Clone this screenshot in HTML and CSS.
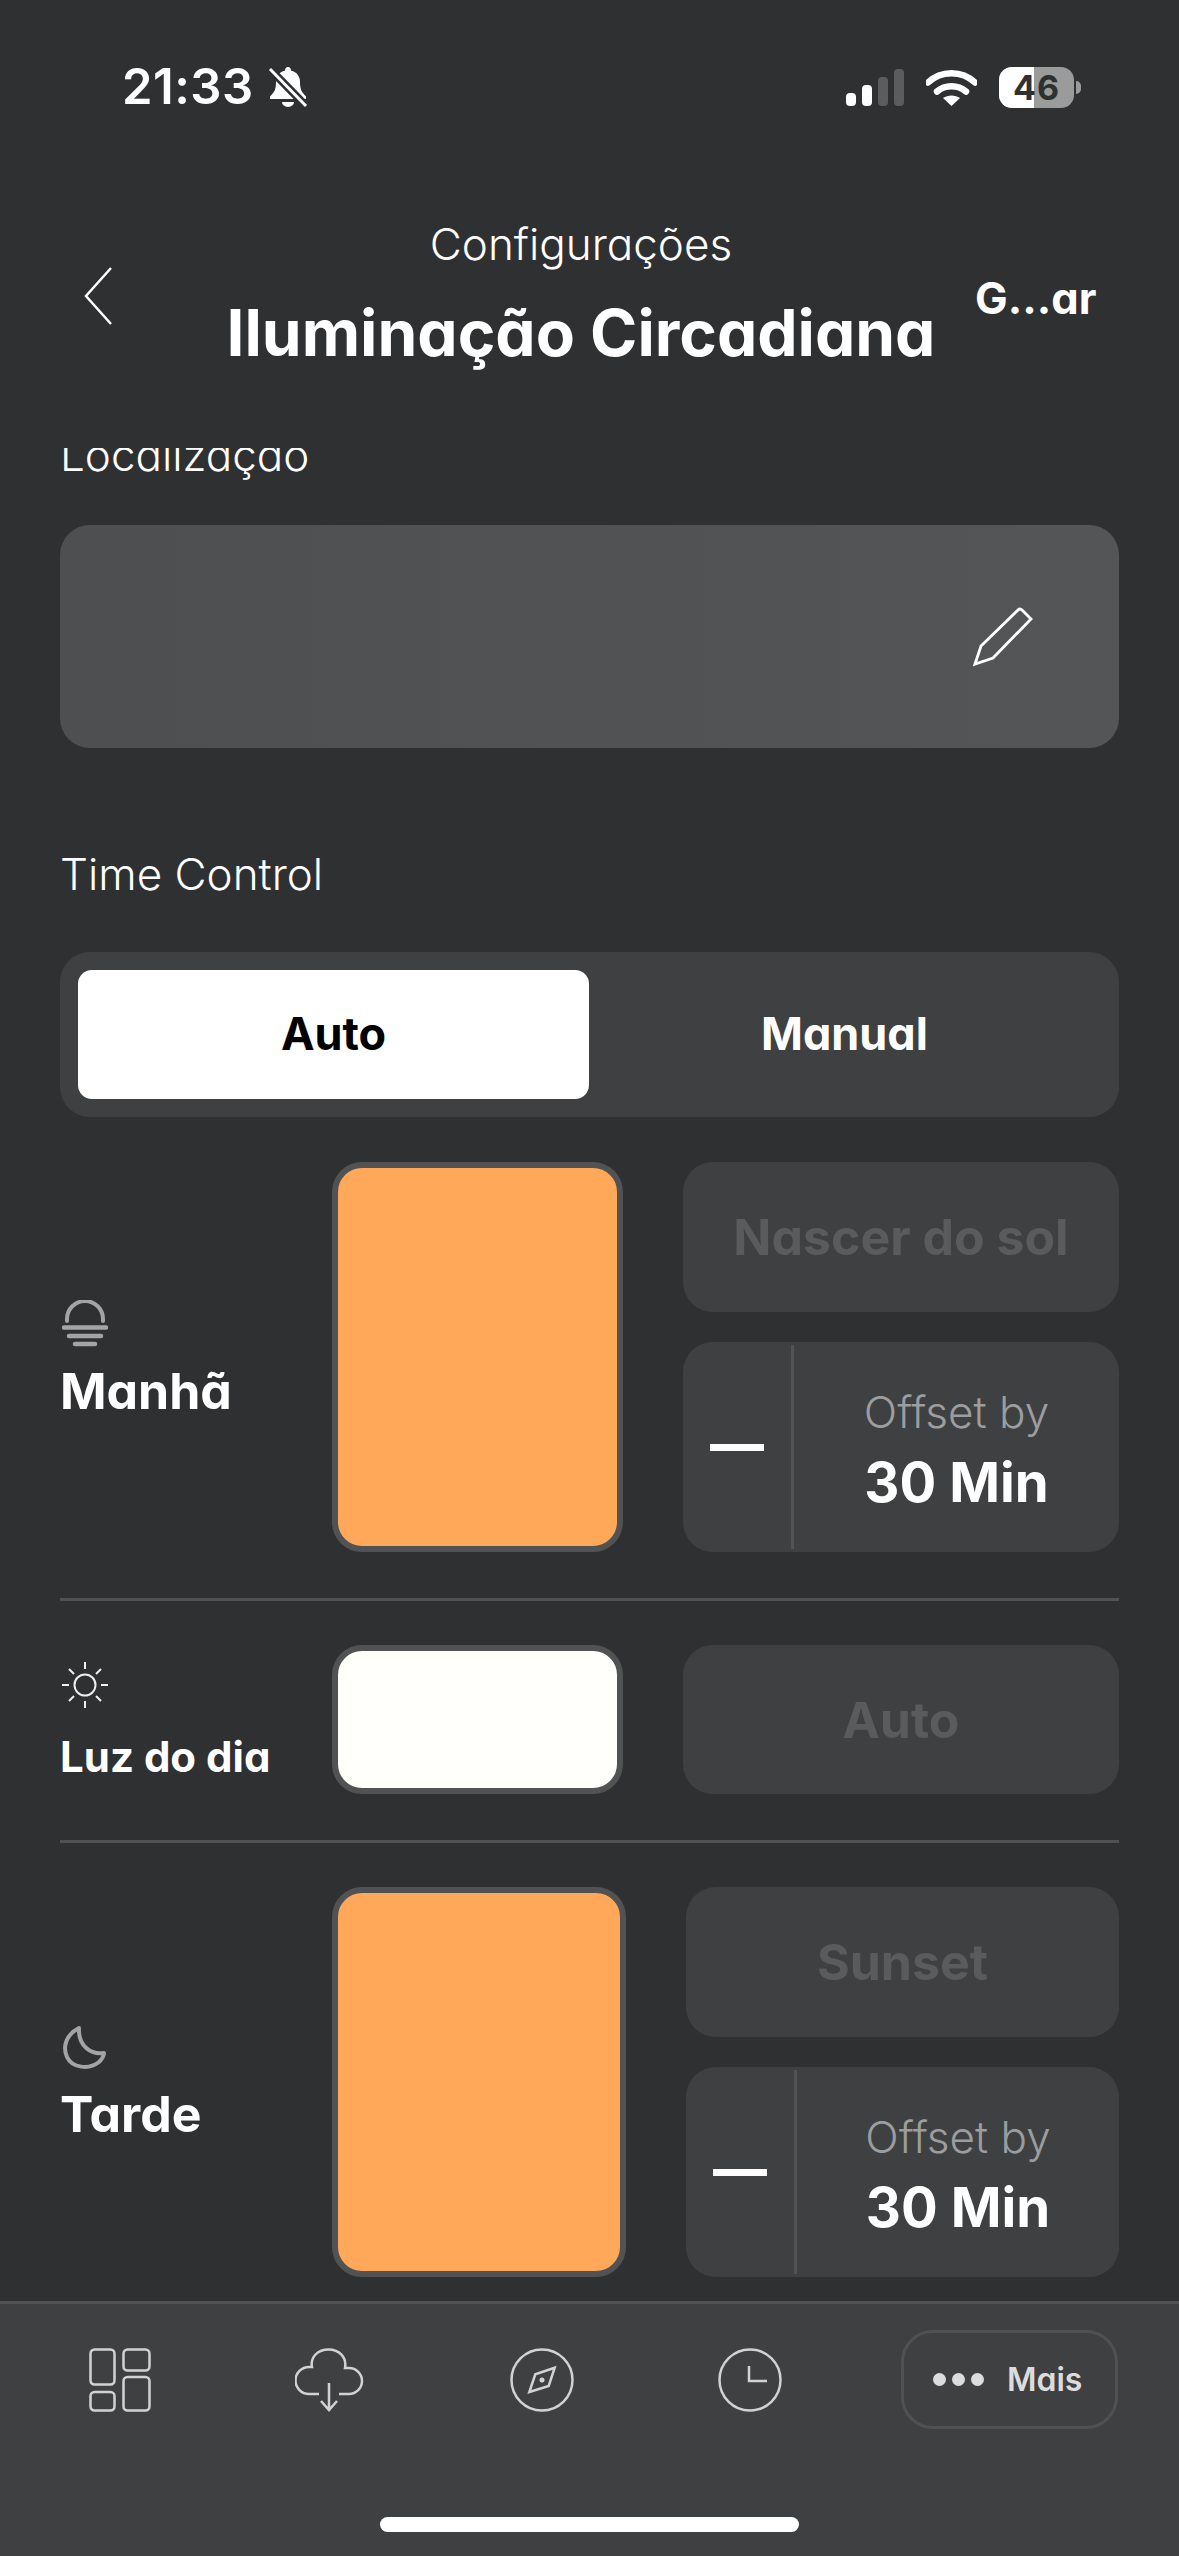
FILE: index.html
```html
<!DOCTYPE html>
<html lang="pt">
<head>
<meta charset="utf-8">
<title>Iluminação Circadiana</title>
<link rel="stylesheet" href="styles.css">
</head>
<body>
<div class="app">
  <div class="status">
    <div class="status-left">
      <span class="time">21:33</span>
      <svg class="bell" width="40" height="42" viewBox="0 0 40 42"><path d="M20 1c2 0 3 1.500 3 3.500 6 1.500 9 6 9 12 0 7 2 10 6 14v2.500H2V30.500c4-4 6-7 6-14 0-6 3-10.500 9-12C17 2.500 18 1 20 1z" fill="#fff"/><path d="M14 36h12a6 5 0 0 1-12 0z" fill="#fff"/><path d="M2 3l36 37" stroke="#2f3032" stroke-width="8"/><path d="M2 3l36 37" stroke="#fff" stroke-width="3"/></svg>
    </div>
    <div class="status-right">
      <svg width="58" height="37" viewBox="0 0 58 37"><rect x="0" y="24" width="10" height="13" rx="4" fill="#fff"/><rect x="16" y="16" width="10" height="21" rx="4" fill="#fff"/><rect x="32" y="8" width="10" height="29" rx="4" fill="#5b5c5e"/><rect x="48" y="0" width="10" height="37" rx="4" fill="#5b5c5e"/></svg>
      <svg width="51" height="37" viewBox="0 0 51 37"><path d="M2 13.500C15 1 36 1 49 13.500" fill="none" stroke="#fff" stroke-width="6.500" stroke-linecap="round"/><path d="M11 22.500c8-7 21-7 29 0" fill="none" stroke="#fff" stroke-width="6.500" stroke-linecap="round"/><path d="M17 29c5-3.500 12-3.500 17 0l-8.500 8z" fill="#fff"/></svg>
      <div class="battery"><div class="battery-body"><span class="battery-fill"></span><span class="battery-num">46</span></div><span class="battery-cap"></span></div>
    </div>
  </div>

  <header class="header">
    <svg class="back" width="28" height="58" viewBox="0 0 28 58"><path d="M27 1L2 29l25 28" fill="none" stroke="#fff" stroke-width="2.500"/></svg>
    <div class="titles">
      <div class="crumb">Configurações</div>
      <h1 class="title">Iluminação Circadiana</h1>
    </div>
    <div class="save">G...ar</div>
  </header>

  <main class="scroll">
    <div class="label clipped">Localização</div>
    <div class="location">
      <svg width="60" height="60" viewBox="0 0 60 60"><path d="M2 57L8 39 45 3Q47 1 49 3L58 12 20 51z" fill="none" stroke="#fff" stroke-width="2.800" stroke-linejoin="miter"/></svg>
    </div>

    <div class="label time-label">Time Control</div>
    <div class="segment">
      <div class="seg seg-on">Auto</div>
      <div class="seg">Manual</div>
    </div>

    <section class="row row-first">
      <div class="row-label">
        <svg class="icon" width="46" height="47" viewBox="0 0 46 47"><path d="M5 21v-2a18 18 0 0 1 36 0v2" fill="none" stroke="#a3a4a5" stroke-width="4" stroke-linecap="round"/><path d="M2 27.500h42M7 36h32M13 44h20" fill="none" stroke="#a3a4a5" stroke-width="4.500" stroke-linecap="round"/></svg>
        <div class="name">Manhã</div>
      </div>
      <div class="swatch swatch-orange"></div>
      <div class="cards">
        <div class="card card-muted">Nascer do sol</div>
        <div class="card offset">
          <div class="minus"><span class="minus-bar"></span></div>
          <div class="offset-text"><span class="offset-by">Offset by</span><span class="offset-val">30 Min</span></div>
        </div>
      </div>
    </section>
    <div class="divider"></div>

    <section class="row row-short">
      <div class="row-label">
        <svg class="icon" width="46" height="46" viewBox="0 0 46 46"><circle cx="23" cy="23" r="10.500" fill="none" stroke="#eee" stroke-width="2"/><path d="M23 0v7M23 39v7M0 23h7M39 23h7M7 7l5 5M34 34l5 5M39 7l-5 5M12 34l-5 5" stroke="#eee" stroke-width="2"/></svg>
        <div class="name name-small">Luz do dia</div>
      </div>
      <div class="swatch swatch-white"></div>
      <div class="cards">
        <div class="card card-muted card-fill">Auto</div>
      </div>
    </section>
    <div class="divider"></div>

    <section class="row">
      <div class="row-label">
        <svg class="icon" width="44" height="44" viewBox="0 0 44 44"><path d="M17 2C5 8 0 20 5 31c5 11 22 13 32 5 3-3 5-6 5-9-13 2-26-7-25-25z" fill="none" stroke="#a3a4a5" stroke-width="4" stroke-linejoin="round"/></svg>
        <div class="name">Tarde</div>
      </div>
      <div class="swatch swatch-orange swatch-wide"></div>
      <div class="cards">
        <div class="card card-muted">Sunset</div>
        <div class="card offset">
          <div class="minus"><span class="minus-bar"></span></div>
          <div class="offset-text"><span class="offset-by">Offset by</span><span class="offset-val">30 Min</span></div>
        </div>
      </div>
    </section>
  </main>

  <nav class="tabbar">
    <div class="tabs">
      <svg width="62" height="64" viewBox="0 0 62 64"><g fill="none" stroke="#d2d2d2" stroke-width="2.500"><rect x="1.500" y="1.500" width="24" height="35" rx="4"/><rect x="34.500" y="1.500" width="26" height="21" rx="4"/><rect x="1.500" y="44" width="24" height="18.500" rx="4"/><rect x="34.500" y="29" width="26" height="33.500" rx="4"/></g></svg>
      <svg width="70" height="64" viewBox="0 0 70 64"><path d="M24 46H14A13.500 13.500 0 0 1 14 19H17C15 9 23 1.500 33.500 1.500S52 9 50 20H54A13 13 0 0 1 54 46H44M34 35V62M26 53l8 9 8-9" fill="none" stroke="#d2d2d2" stroke-width="2.500"/></svg>
      <svg width="64" height="64" viewBox="0 0 64 64"><circle cx="32" cy="32" r="30.500" fill="none" stroke="#d2d2d2" stroke-width="2.500"/><path d="M44.700 19.700L25.300 26.300 19.300 44 38.700 38z" fill="none" stroke="#d2d2d2" stroke-width="2.500"/><circle cx="32" cy="32" r="2.500" fill="#d2d2d2"/></svg>
      <svg width="64" height="64" viewBox="0 0 64 64"><circle cx="32" cy="32" r="30.500" fill="none" stroke="#d2d2d2" stroke-width="2.500"/><path d="M31 18v15h18" fill="none" stroke="#d2d2d2" stroke-width="2.500"/></svg>
    </div>
    <div class="more">
      <span class="dots"><i></i><i></i><i></i></span>
      <span class="more-text">Mais</span>
    </div>
  </nav>
  <div class="home"></div>
</div>
</body>
</html>
```

FILE: styles.css
```css
* { box-sizing: border-box; }
html, body { margin: 0; padding: 0; background: #2f3032; }
body { font-family: Inter, "Noto Sans", sans-serif; font-feature-settings: "cv11" 1; color: #fff; }
.app { width: 1179px; height: 2556px; position: relative; overflow: hidden; display: flex; flex-direction: column; }

.status { height: 214px; padding: 66px 98px 0 122px; display: flex; justify-content: space-between; align-items: flex-start; flex: none; }
.status-left { display: flex; align-items: center; gap: 14px; height: 42px; }
.time { font-size: 49px; font-weight: 600; line-height: 44px; letter-spacing: 0.5px; }
.status-right { display: flex; align-items: center; gap: 22px; height: 42px; }
.battery { display: flex; align-items: center; gap: 2px; }
.battery-body { width: 75px; height: 41px; border-radius: 13px; background: #9a9b9b; position: relative; overflow: hidden; display: flex; align-items: center; justify-content: center; }
.battery-fill { position: absolute; left: 0; top: 0; bottom: 0; width: 35px; background: #fff; }
.battery-num { position: relative; color: #2f3032; font-size: 34px; font-weight: 700; letter-spacing: 1px; font-family: Inter, sans-serif; }
.battery-cap { width: 5px; height: 13px; background: #9a9b9b; border-radius: 0 6px 6px 0; }

.header { flex: none; height: 234px; display: flex; align-items: flex-start; padding-left: 84px; }
.back { flex: none; margin-top: 53px; }
.titles { width: 762px; margin-left: 88px; text-align: center; }
.crumb { font-size: 44px; font-weight: 300; line-height: 60px; }
.title { margin: 19px 0 0; font-size: 64px; font-weight: 700; line-height: 80px; white-space: nowrap; }
.save { margin: 54px 0 0 13px; font-size: 43.500px; font-weight: 700; line-height: 60px; }

.scroll { flex: none; height: 1853px; overflow: hidden; padding: 0 60px; }
.label { font-size: 44px; font-weight: 300; line-height: 60px; }
.clipped { margin-top: -23px; }
.location { margin-top: 40px; height: 223px; border-radius: 30px; background: linear-gradient(90deg, #4e4f51, #545557); display: flex; align-items: center; justify-content: flex-end; padding-right: 86px; }
.time-label { margin-top: 96px; }
.segment { margin-top: 48px; height: 165px; padding: 18px 19px 18px 18px; border-radius: 30px; background: #3f4042; display: grid; grid-template-columns: 1fr 1fr; }
.seg { display: flex; align-items: center; justify-content: center; padding-bottom: 2px; font-size: 45px; font-weight: 700; border-radius: 14px; }
.seg-on { background: #fff; color: #000; }

.row { display: flex; height: 390px; }
.row-first { margin-top: 45px; }
.row-short { height: 149px; }
.row-label { flex: none; width: 272px; padding-top: 8px; display: flex; flex-direction: column; justify-content: center; align-items: flex-start; }
.icon { margin-left: 2px; }
.name { margin-top: 12px; font-size: 50px; font-weight: 700; line-height: 64px; }
.name-small { margin-top: 21px; font-size: 42px; line-height: 56px; }
.swatch { flex: none; width: 291px; border: 6px solid #515254; border-radius: 30px; }
.swatch-wide { width: 294px; }
.swatch-orange { background: #ffa85a; }
.swatch-white { background: #fffffb; }
.cards { flex: 1; margin-left: 60px; display: flex; flex-direction: column; gap: 30px; }
.card { border-radius: 30px; background: #3f4042; }
.card-muted { height: 150px; display: flex; align-items: center; justify-content: center; font-size: 50px; font-weight: 700; color: #5a5b5d; }
.card-fill { height: 100%; }
.offset { flex: 1; display: flex; padding: 3px 0; }
.minus { flex: none; width: 111px; border-right: 3px solid #525355; display: flex; align-items: center; justify-content: center; }
.minus-bar { width: 54px; height: 7px; background: #fff; }
.offset-text { flex: 1; padding-top: 6px; display: flex; flex-direction: column; align-items: center; justify-content: center; }
.offset-by { font-size: 44px; font-weight: 300; line-height: 58px; color: #9c9d9e; }
.offset-val { font-size: 54.500px; font-weight: 700; line-height: 72px; margin-top: 5px; }
.divider { height: 3px; background: #505153; margin: 46px 0 44px; }

.tabbar { flex: none; height: 255px; background: #3f4042; border-top: 3px solid #505153; padding: 26px 61px 0 89px; display: flex; align-items: flex-start; justify-content: space-between; }
.tabs { display: flex; align-items: center; height: 99px; gap: 0; width: 693px; justify-content: space-between; }
.more { width: 217px; height: 99px; border: 3px solid #505153; border-radius: 32px; display: flex; align-items: center; padding-left: 29px; gap: 23px; color: #dcdcdc; }
.dots { display: flex; gap: 6px; }
.dots i { width: 13px; height: 13px; border-radius: 50%; background: #dcdcdc; }
.more-text { font-size: 32px; font-weight: 600; }
.home { position: absolute; left: 380px; top: 2517px; width: 419px; height: 15px; background: #fff; border-radius: 8px; }
```
